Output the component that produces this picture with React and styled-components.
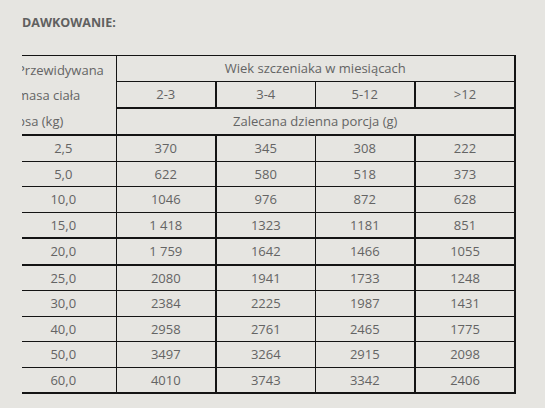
import React from "react";
import styled, { createGlobalStyle } from "styled-components";

const GlobalStyle = createGlobalStyle`
  html, body {
    margin: 0;
    padding: 0;
    background: #e6e5e1;
  }
  body {
    font-family: "Open Sans", "Liberation Sans", sans-serif;
    color: #646464;
  }
`;

const Page = styled.div`
  width: 545px;
  height: 408px;
  padding: 14px 0 0 22px;
  box-sizing: border-box;
  overflow: hidden;
`;

const Title = styled.h2`
  margin: 0;
  font-size: 12.5px;
  font-weight: 700;
  line-height: 18px;
  color: #606060;
`;

const Table = styled.table`
  margin-top: 23px;
  border-collapse: collapse;
  table-layout: fixed;
  width: 493px;
  font-size: 13px;
`;

const Cell = styled.td`
  height: 24.5px;
  padding: 0;
  text-align: center;
  vertical-align: middle;
  border-top: ${(p) => (p.$thickTop ? 2 : 1)}px solid #141414;
  border-bottom: ${(p) => (p.$thickBottom ? 2 : 1)}px solid #141414;
  border-left: ${(p) => (p.$thickLeft ? 2 : 1)}px solid #141414;
  border-right: ${(p) => (p.$thickRight ? 2 : 1)}px solid #141414;
  white-space: nowrap;
  overflow: hidden;
`;

const WeightCell = styled(Cell)`
  border-left: none;
  padding-right: 11px;
`;

const LabelCell = styled(Cell)`
  border-left: none;
  text-align: left;
  vertical-align: top;
  padding-top: 1.5px;
`;

const LabelLine = styled.div`
  height: 25.5px;
  line-height: 25.5px;
  margin-left: -5px;
`;

const ages = ["2-3", "3-4", "5-12", ">12"];

const rows = [
  ["2,5", "370", "345", "308", "222"],
  ["5,0", "622", "580", "518", "373"],
  ["10,0", "1046", "976", "872", "628"],
  ["15,0", "1 418", "1323", "1181", "851"],
  ["20,0", "1 759", "1642", "1466", "1055"],
  ["25,0", "2080", "1941", "1733", "1248"],
  ["30,0", "2384", "2225", "1987", "1431"],
  ["40,0", "2958", "2761", "2465", "1775"],
  ["50,0", "3497", "3264", "2915", "2098"],
  ["60,0", "4010", "3743", "3342", "2406"],
];

const thickAfter = [3, 4, 9];

const App = () => {
  return (
    <Page>
      <GlobalStyle />
      <Title>DAWKOWANIE:</Title>
      <Table>
        <colgroup>
          <col style={{ width: 94 }} />
          <col style={{ width: 100 }} />
          <col style={{ width: 99 }} />
          <col style={{ width: 100 }} />
          <col style={{ width: 100 }} />
        </colgroup>
        <tbody>
          <tr>
            <LabelCell rowSpan={3} $thickBottom>
              <LabelLine>Przewidywana</LabelLine>
              <LabelLine>masa ciała</LabelLine>
              <LabelLine>psa (kg)</LabelLine>
            </LabelCell>
            <Cell colSpan={4} $thickRight>
              Wiek szczeniaka w miesiącach
            </Cell>
          </tr>
          <tr>
            {ages.map((a, i) => (
              <Cell
                key={a}
                $thickBottom
                $thickLeft={i === 1 || i === 3}
                $thickRight={i === 3}
              >
                {a}
              </Cell>
            ))}
          </tr>
          <tr>
            <Cell colSpan={4} $thickBottom $thickRight>
              Zalecana dzienna porcja (g)
            </Cell>
          </tr>
          {rows.map((r, ri) => (
            <tr key={r[0]}>
              <WeightCell $thickBottom={thickAfter.includes(ri)}>
                {r[0]}
              </WeightCell>
              {r.slice(1).map((v, i) => (
                <Cell
                  key={i}
                  $thickBottom={thickAfter.includes(ri)}
                  $thickLeft={i === 1 || i === 3}
                  $thickRight={i === 3}
                >
                  {v}
                </Cell>
              ))}
            </tr>
          ))}
        </tbody>
      </Table>
    </Page>
  );
};

export default App;
